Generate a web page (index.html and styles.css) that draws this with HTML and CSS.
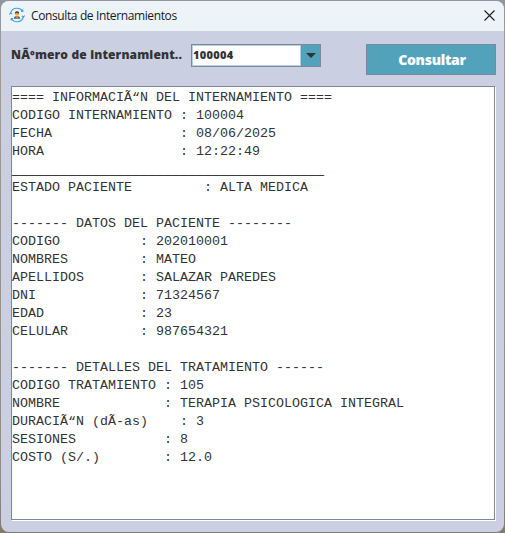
FILE: index.html
```html
<!DOCTYPE html>
<html lang="es">
<head>
<meta charset="utf-8">
<title>Consulta de Internamientos</title>
<link rel="stylesheet" href="styles.css">
</head>
<body>
<main class="window">
  <header class="titlebar">
    <svg class="app-icon" viewBox="0 0 16 16" width="16" height="16">
      <g fill="none" stroke="#3fa0e8" stroke-width="1.1">
        <path d="M1.6 6A6.7 6.7 0 0 1 13.6 4.2M14.4 10A6.7 6.7 0 0 1 2.4 11.8"/>
        <path d="M.3 7.4 1.6 5.9l1.5 1.3M15.7 8.6 14.4 10.1l-1.5-1.3M12 4.4h1.8V2.6M4 11.6H2.2v1.8"/>
      </g>
      <path d="M4.7 11.7Q5 9 8 9t3.3 2.7z" fill="#59656d"/>
      <path d="M8 9 6.8 10 8 11.3 9.2 10z" fill="#f2a33c"/>
      <circle cx="8" cy="6.7" r="2.1" fill="#f2a33c"/>
      <path d="M5.8 6.6Q5.7 4.2 8 4.2t2.2 2.4Q8 6.5 7.6 5.8 7 6.6 5.8 6.6z" fill="#3c4044"/>
    </svg>
    <h1 class="title">Consulta de Internamientos</h1>
    <svg class="close" viewBox="0 0 11 11" width="11" height="11"><path d="M.5.5l10 10M10.5.5l-10 10" stroke="#1b1d1f" stroke-width="1.1"/></svg>
  </header>
  <section class="content">
    <form class="controls">
      <span class="label">NÃºmero de internamient..</span>
      <div class="combo">
        <span class="combo-value">100004</span>
        <span class="combo-arrow"><svg viewBox="0 0 10 5" width="10" height="5"><path d="M0 0h10L5 5z" fill="#2f3335"/></svg></span>
      </div>
      <button class="submit" type="button">Consultar</button>
    </form>
    <pre class="report">==== INFORMACIÃ“N DEL INTERNAMIENTO ====
CODIGO INTERNAMIENTO : 100004
FECHA                : 08/06/2025
HORA                 : 12:22:49
<span class="rule">_______________________________________</span>
ESTADO PACIENTE         : ALTA MEDICA

------- DATOS DEL PACIENTE --------
CODIGO          : 202010001
NOMBRES         : MATEO
APELLIDOS       : SALAZAR PAREDES
DNI             : 71324567
EDAD            : 23
CELULAR         : 987654321

------- DETALLES DEL TRATAMIENTO ------
CODIGO TRATAMIENTO : 105
NOMBRE             : TERAPIA PSICOLOGICA INTEGRAL
DURACIÃ“N (dÃ-as)    : 3
SESIONES           : 8
COSTO (S/.)        : 12.0</pre>
  </section>
</main>
</body>
</html>
```

FILE: styles.css
```css
* { box-sizing: border-box; }

body {
  margin: 0;
  height: 533px;
  overflow: hidden;
  padding: 1px 1px 1px;
  background: linear-gradient(#93959d, #9a9ca3 48px, #a29b94 60px, #928b80 480px, #827b70);
}

.window {
  width: 503px;
  height: 531px;
  display: flex;
  flex-direction: column;
  border-radius: 8px;
  overflow: hidden;
  background: #cbcfe2;
}

.titlebar {
  height: 30px;
  flex: none;
  display: flex;
  align-items: center;
  padding: 0 10px 2px 8px;
  background: #ecf4f8;
}

.app-icon { flex: none; }

.title {
  flex: 1;
  margin: 2px 0 0 6px;
  font: 400 12px/16px "Open Sans", "Noto Sans", sans-serif;
  letter-spacing: -0.38px;
  color: #1a1a1a;
  white-space: nowrap;
}

.close { flex: none; margin-right: -1px; }

.content {
  flex: 1;
  display: flex;
  flex-direction: column;
  padding: 13px 8px 12px 10px;
}

.controls {
  display: flex;
  align-items: flex-start;
  height: 42px;
}

.label {
  width: 180px;
  flex: none;
  font: 800 12px/22px "Open Sans", "Noto Sans", sans-serif;
  letter-spacing: 0.15px;
  color: #333;
  white-space: nowrap;
}

.combo {
  width: 130px;
  height: 23px;
  display: flex;
  border: 1px solid #7a8a99;
  background: #fff;
}

.combo-value {
  flex: 1;
  border: 1px solid #b8cfe5;
  font: 800 11px/18px "Open Sans", "Noto Sans", sans-serif;
  letter-spacing: 0.3px;
  color: #333;
}

.combo-arrow {
  width: 19px;
  display: flex;
  align-items: center;
  justify-content: center;
  border-left: 1px solid #7a8a99;
  background: #53a2bc;
}

.submit {
  width: 130px;
  height: 31px;
  margin-left: 45px;
  padding: 1px 0 0 2px;
  border: 1px solid #7a8a99;
  background: #53a2bc;
  color: #fff;
  font: 800 14px/28px "Open Sans", "Noto Sans", sans-serif;
  letter-spacing: -0.3px;
}

.report {
  flex: 1;
  margin: 0 1px 0 0;
  padding: 2px 0 0;
  border: 1px solid #7a8a99;
  box-shadow: 1px 1px 0 #fff;
  background: #fff;
  color: #333;
  font: 400 13.33px/18px "Liberation Mono", monospace;
  white-space: pre;
}

.rule {
  display: inline-block;
  transform: translateY(1px);
  text-shadow: 0 0 0 #222, 0 0 0 #222;
}
```
